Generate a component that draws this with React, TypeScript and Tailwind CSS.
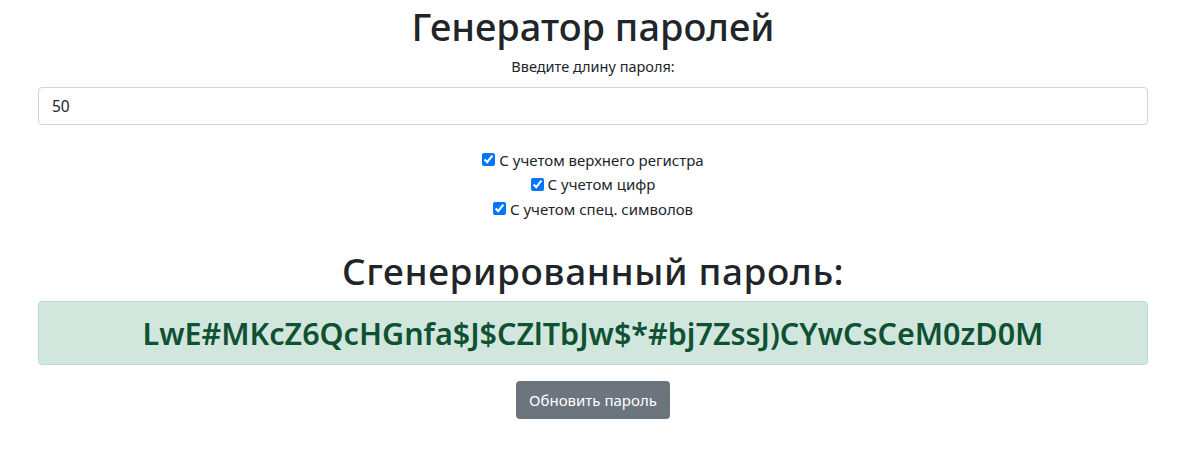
import React, { useState } from 'react'

const font = { fontFamily: '"Noto Sans", "Open Sans", sans-serif' }

const Option = ({ label }: { label: string }) => {
    const [on, setOn] = useState(true)
    return (
        <label className='flex items-center justify-center gap-[4px] h-[24.5px]'>
            <input type='checkbox' checked={on} onChange={() => setOn(!on)} className='w-[13px] h-[13px] accent-[#0075ff]' />
            <span>{label}</span>
        </label>
    )
}

export default function App() {
    return (
        <main className="bg-white text-[#212529] text-center w-[1186px] font-['Noto_Sans',sans-serif]" style={font}>
            <h1 className='text-[38px] font-medium leading-[1.2] pt-[4px] mb-[6px]'>Генератор паролей</h1>
            <div className='text-[14.5px] leading-[20px] mb-[11px]'>Введите длину пароля:</div>
            <div className='mx-[38px]'>
                <input
                    type='text'
                    defaultValue='50'
                    className='block w-full h-[38px] px-[13px] text-[15.5px] text-[#212529] border border-[#ced4da] rounded-[4px] outline-none'
                />
            </div>
            <div className='pt-[23px] text-[15px] leading-[24px]'>
                <Option label='С учетом верхнего регистра' />
                <Option label='С учетом цифр' />
                <Option label='С учетом спец. символов' />
            </div>
            <h2 className='text-[37px] tracking-[0.6px] font-medium leading-[1.2] mt-[28px] mb-[8px]'>Сгенерированный пароль:</h2>
            <div className='mx-[38px] h-[64px] flex items-center justify-center bg-[#d1e7dd] border border-[#badbcc] rounded-[4px] text-[#0f5132] text-[30.5px] font-semibold'>
                LwE#MKcZ6QcHGnfa$J$CZlTbJw$*#bj7ZssJ)CYwCsCeM0zD0M
            </div>
            <div className='pt-[16px] pb-[39px]'>
                <button className='h-[38px] px-[13px] bg-[#6c757d] text-white text-[15px] rounded-[4px]'>Обновить пароль</button>
            </div>
        </main>
    )
}
